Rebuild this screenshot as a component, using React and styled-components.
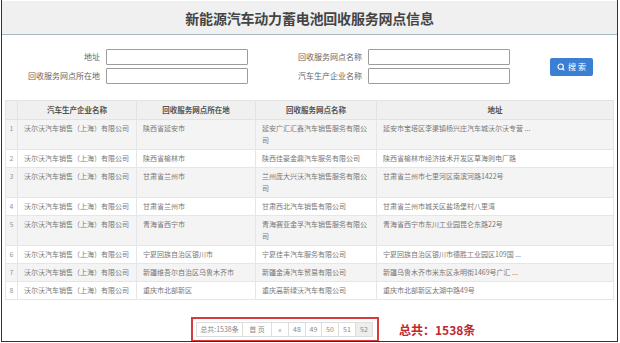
import React from 'react'
import styled, { createGlobalStyle } from 'styled-components'
import { Search } from 'lucide-react'

const GlobalStyle = createGlobalStyle`
body{
  margin:0;
  background:#fff;
  font-family:"Noto Sans CJK SC","Liberation Sans",sans-serif;
}
`

const rows = [
  ['陕西省延安市', '延安广汇汇鑫汽车销售服务有限公司', '延安市宝塔区李渠镇杨兴庄汽车城沃尔沃专营 ...'],
  ['陕西省榆林市', '陕西佳豪金鼎汽车服务有限公司', '陕西省榆林市经济技术开发区草海则电厂路'],
  ['甘肃省兰州市', '兰州庞大兴沃汽车销售服务有限公司', '甘肃省兰州市七里河区南滨河路1422号'],
  ['甘肃省兰州市', '甘肃西北汽车销售有限公司', '甘肃省兰州市城关区盐场堡村八里湾'],
  ['青海省西宁市', '青海赛亚金孚汽车销售服务有限公司', '青海省西宁市东川工业园昆仑东路22号'],
  ['宁夏回族自治区银川市', '宁夏佳丰汽车服务有限公司', '宁夏回族自治区银川市德胜工业园区109国 ...'],
  ['新疆维吾尔自治区乌鲁木齐市', '新疆金涛汽车贸易有限公司', '新疆乌鲁木齐市米东区永明街1469号广汇 ...'],
  ['重庆市北部新区', '重庆高新绿沃汽车有限公司', '重庆市北部新区太湖中路49号'],
]

const pages = [
  { label: '总共:1538条', w: 47 },
  { label: '首 页', w: 30 },
  { label: '«', w: 18 },
  { label: '48', w: 18 },
  { label: '49', w: 17 },
  { label: '50', w: 18 },
  { label: '51', w: 18 },
  { label: '52', w: 18, active: true },
]

export default function App() {
  return (
    <>
      <GlobalStyle />
      <Frame>
        <Header>
          <Title>新能源汽车动力蓄电池回收服务网点信息</Title>
        </Header>
        <Form>
          <Label>地址</Label>
          <Input />
          <Label>回收服务网点名称</Label>
          <Input />
          <SearchButton>
            <Search size={8} color="#fff" strokeWidth={3.2} />
            <span>搜 索</span>
          </SearchButton>
          <Label>回收服务网点所在地</Label>
          <Input />
          <Label>汽车生产企业名称</Label>
          <Input />
        </Form>
        <Table>
          <colgroup>
            <col style={{ width: 12 }} />
            <col style={{ width: 119 }} />
            <col style={{ width: 119 }} />
            <col style={{ width: 121 }} />
            <col style={{ width: 237 }} />
          </colgroup>
          <thead>
            <tr>
              <Th />
              <Th>汽车生产企业名称</Th>
              <Th>回收服务网点所在地</Th>
              <Th>回收服务网点名称</Th>
              <Th>地址</Th>
            </tr>
          </thead>
          <tbody>
            {rows.map((r, i) => (
              <Row key={i} $odd={i % 2 === 0}>
                <Num>{i + 1}</Num>
                <Td $nowrap>沃尔沃汽车销售（上海）有限公司</Td>
                <Td>{r[0]}</Td>
                <Td>{r[1]}</Td>
                <Td $nowrap>{r[2]}</Td>
              </Row>
            ))}
          </tbody>
        </Table>
        <Footer>
          <PagerBox>
            {pages.map((p) => (
              <PageCell key={p.label} $w={p.w} $active={p.active}>
                {p.label}
              </PageCell>
            ))}
          </PagerBox>
          <Total>总共：1538条</Total>
        </Footer>
      </Frame>
    </>
  )
}

const Frame = styled.div`
  box-sizing:border-box;
  width:617px;
  height:342px;
  margin-left:1px;
  padding-top:1px;
  border:1px solid #333;
  border-top:none;
  overflow:hidden;
`
const Header = styled.div`
  height:33px;
  background:#f0f0f0;
  border-bottom:1px solid #a3b7c5;
  display:flex;
  align-items:center;
  justify-content:center;
`
const Title = styled.h1`
  margin:0;
  font-size:14px;
  font-weight:700;
  color:#444;
  letter-spacing:-0.2px;
`
const Form = styled.div`
  display:grid;
  grid-template-columns:98px 142px 108px 142px auto;
  grid-auto-rows:16px;
  column-gap:6px;
  row-gap:3px;
  padding-top:14px;
`
const Label = styled.label`
  font-size:8px;
  line-height:16px;
  color:#666;
  text-align:right;
  white-space:nowrap;
`
const Input = styled.input`
  box-sizing:border-box;
  height:16px;
  width:100%;
  margin:0;
  border:1px solid #9c9c9c;
  border-radius:1px;
  background:#fff;
`
const SearchButton = styled.button`
  grid-column:5;
  grid-row:1 / span 2;
  align-self:center;
  justify-self:start;
  margin-left:34px;
  width:43px;
  height:18px;
  border:none;
  border-radius:2px;
  background:#3b7fd3;
  color:#fff;
  font-family:inherit;
  font-size:8px;
  display:flex;
  align-items:center;
  justify-content:center;
  gap:3px;
  padding:0;
`
const Table = styled.table`
  table-layout:fixed;
  border-collapse:collapse;
  width:608px;
  margin:16px 0 0 3px;
  border:1px solid #e2e2e2;
`
const Th = styled.th`
  height:18px;
  padding:0 4px;
  background:#f0f0f0;
  border:1px solid #e2e2e2;
  font-size:7.5px;
  line-height:10px;
  font-weight:700;
  color:#555;
  text-align:center;
`
const Row = styled.tr`
  background:${(p) => (p.$odd ? '#f4f4f4' : '#fff')};
`
const Td = styled.td`
  padding:2px 6px 3px;
  border:1px solid #e6e6e6;
  font-size:7px;
  line-height:12px;
  color:#777;
  vertical-align:top;
  white-space:${(p) => (p.$nowrap ? 'nowrap' : 'normal')};
  overflow:hidden;
`
const Num = styled(Td)`
  padding:2px 0 3px;
  text-align:center;
  color:#999;
`
const Footer = styled.div`
  display:flex;
  align-items:center;
  margin-top:17px;
  padding-left:189px;
`
const PagerBox = styled.div`
  display:flex;
  padding:3px 4px 3px 3px;
  border:2px solid #d63a3a;
`
const PageCell = styled.span`
  box-sizing:border-box;
  width:${(p) => p.$w}px;
  height:15px;
  margin-left:-1px;
  border:1px solid #ddd;
  background:${(p) => (p.$active ? '#eee' : '#fff')};
  font-size:7px;
  line-height:13px;
  color:#888;
  text-align:center;
  white-space:nowrap;
  &:first-child{margin-left:0;}
`
const Total = styled.div`
  margin-left:20px;
  font-size:12px;
  font-weight:700;
  color:#c1272d;
`
